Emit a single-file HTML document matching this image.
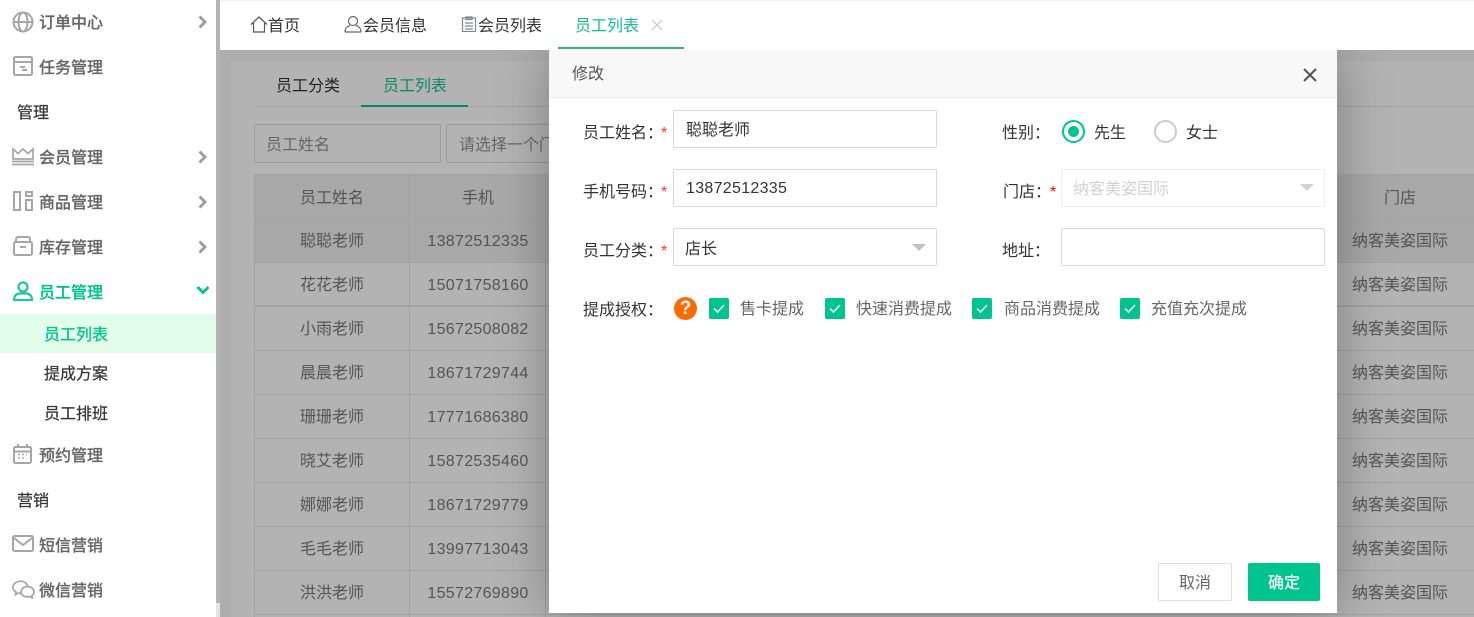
<!DOCTYPE html>
<html lang="zh">
<head>
<meta charset="utf-8">
<title>员工列表</title>
<style>
*{box-sizing:border-box;margin:0;padding:0}
html,body{width:1474px;height:617px;overflow:hidden;background:#fff}
body{position:relative;font-family:"Liberation Sans","Noto Sans CJK SC",sans-serif;font-size:16px;color:#333}
.a{position:absolute;white-space:nowrap}
.side{left:0;top:0;width:216px;height:617px;background:#fff}
.sb{left:216px;top:0;width:4px;height:603px;background:#b3b3b3}
.sb2{left:216px;top:603px;width:4px;height:14px;background:#e3e3e3}
.m{left:39px;line-height:24px;color:#666;font-weight:500;-webkit-text-stroke:.2px #666;transform:translateY(2px)}
.g{left:17px;line-height:24px;color:#333;-webkit-text-stroke:.2px #333;transform:translateY(2px)}
.s{left:44px;line-height:24px;color:#333;-webkit-text-stroke:.2px #333;transform:translateY(2px)}
.ic{position:absolute;fill:none;stroke:#a6a6a6}
.ar{position:absolute;left:198px;fill:none;stroke:#9a9aa6;stroke-width:2.800}
.top{left:220px;top:0;width:1254px;height:50px;background:#fff;border-top:1px solid #f2f2f2}
.t{line-height:24px;top:14px;color:#333;transform:translateY(1px)}
.bg{left:220px;top:50px;width:1254px;height:567px;background:#adadad}
.panel{left:231px;top:61px;width:1243px;height:556px;background:#b3b3b3}
.row{position:absolute;left:254px;width:1220px;height:44px;border-bottom:1px solid #a3a3a3;background:#b3b3b3}
.c{position:absolute;line-height:24px;color:#555;white-space:nowrap;transform:translate(-50%,2px)}
.modal{left:549px;top:50px;width:788px;height:563px;background:#fff;box-shadow:1px 1px 50px rgba(0,0,0,.3);clip-path:inset(0 -70px -70px -70px)}
.mh{left:549px;top:50px;width:788px;height:48px;background:#f8f8f8;border-bottom:1px solid #eee;line-height:50px;padding-left:23px;color:#555}
.l{line-height:24px;color:#333;transform:translateY(2px)}
.req{color:#f33;line-height:24px}
.ip{position:absolute;background:#fff;border:1px solid #d9d9d9;border-radius:2px;height:38px;line-height:36px;padding-left:12px;color:#333;width:264px}
.tri{position:absolute;width:0;height:0;border-left:7px solid transparent;border-right:7px solid transparent;border-top:7px solid #c2c2c2}
.cb{position:absolute;top:298px;width:20px;height:21px;background:#00c48f;border-radius:2px}
.cb svg{position:absolute;left:3px;top:4px}
.cl{top:297px;line-height:24px;color:#666;transform:translateY(1px)}
</style>
</head>
<body>
<div class="a side"></div><div class="a sb"></div><div class="a sb2"></div>

<svg class="ic" style="left:12px;top:11px" width="22" height="22" viewBox="0 0 22 22" stroke-width="2"><circle cx="11" cy="11" r="9.500"/><ellipse cx="11" cy="11" rx="4.500" ry="9.500"/><path d="M1.500 11h19"/></svg>
<div class="a m" style="top:10px">订单中心</div>
<svg class="ar" style="top:15px" width="10" height="14" viewBox="0 0 10 14"><path d="M1.500 1.500 7 7l-5.500 5.500"/></svg>

<svg class="ic" style="left:13px;top:56px" width="20" height="20" viewBox="0 0 20 20" stroke-width="2"><rect x="1" y="1" width="18" height="18" rx="1.500"/><path d="M1 6h18M7 11h5M9 14h5"/></svg>
<div class="a m" style="top:55px">任务管理</div>

<div class="a g" style="top:100px">管理</div>

<svg class="ic" style="left:12px;top:147px" width="22" height="19" viewBox="0 0 22 19" stroke-width="1.700"><path d="M1 12V2l5 4.500L11 2l5 4.500L21 2v10zM0 14.500h22M0 17.500h22"/></svg>
<div class="a m" style="top:145px">会员管理</div>
<svg class="ar" style="top:150px" width="10" height="14" viewBox="0 0 10 14"><path d="M1.500 1.500 7 7l-5.500 5.500"/></svg>

<svg class="ic" style="left:13px;top:191px" width="20" height="20" viewBox="0 0 20 20" stroke-width="2"><rect x="1" y="1" width="6" height="18"/><rect x="13" y="1" width="6" height="4"/><rect x="13" y="9" width="6" height="10"/></svg>
<div class="a m" style="top:190px">商品管理</div>
<svg class="ar" style="top:195px" width="10" height="14" viewBox="0 0 10 14"><path d="M1.500 1.500 7 7l-5.500 5.500"/></svg>

<svg class="ic" style="left:13px;top:236px" width="20" height="20" viewBox="0 0 20 20" stroke-width="2"><path d="M3 6V3a2 2 0 0 1 2-2h10a2 2 0 0 1 2 2v3"/><rect x="1" y="6" width="18" height="13" rx="1.500"/><path d="M7 11h6"/></svg>
<div class="a m" style="top:235px">库存管理</div>
<svg class="ar" style="top:240px" width="10" height="14" viewBox="0 0 10 14"><path d="M1.500 1.500 7 7l-5.500 5.500"/></svg>

<svg class="ic" style="left:13px;top:281px;stroke:#1fc898" width="20" height="20" viewBox="0 0 20 20" stroke-width="2.200"><circle cx="10" cy="6" r="4.500"/><path d="M1 19c0-4.500 2.500-6 5-6.500h8c2.500.5 5 2 5 6.500z"/></svg>
<div class="a m" style="top:280px;color:#00c48f;-webkit-text-stroke:.3px #00c48f">员工管理</div>
<svg class="a" style="left:196px;top:285px;fill:none;stroke:#00c48f;stroke-width:2.800" width="14" height="10" viewBox="0 0 14 10"><path d="M1.500 2 7 7.500 12.500 2"/></svg>

<div class="a" style="left:0;top:314px;width:216px;height:39px;background:#e3fdeb"></div>
<div class="a s" style="top:322px;color:#00c48f;-webkit-text-stroke:.3px #00c48f">员工列表</div>
<div class="a s" style="top:361px">提成方案</div>
<div class="a s" style="top:401px">员工排班</div>

<svg class="ic" style="left:13px;top:444px" width="19" height="20" viewBox="0 0 19 20" stroke-width="2"><rect x="1" y="3" width="17" height="16" rx="1.500"/><path d="M1 7.500h17M5 0v4M14 0v4"/><path d="M5 10.500h2M9 10.500h2M13 10.500h1M5 14h2M9 14h2" stroke-width="1.400"/></svg>
<div class="a m" style="top:443px">预约管理</div>

<div class="a g" style="top:488px">营销</div>

<svg class="ic" style="left:12px;top:535px" width="22" height="18" viewBox="0 0 22 18" stroke-width="2"><rect x="1" y="1" width="20" height="15" rx="1.500"/><path d="M2 3l9 7 9-7"/></svg>
<div class="a m" style="top:533px">短信营销</div>

<svg class="ic" style="left:12px;top:580px" width="23" height="19" viewBox="0 0 23 19" stroke-width="1.700"><path d="M9 13.500c-1 0-2-.1-2.800-.4L3.500 14.500l.6-2.400C2.200 11 1 9.300 1 7.400 1 4 4.500 1.200 8.500 1.200c3.500 0 6.500 2 7.200 4.800"/><path d="M15.500 6.500c3.500 0 6.500 2.400 6.500 5.300 0 1.600-.9 3-2.300 4l.5 2-2.400-1.200c-.7.200-1.500.3-2.300.3-3.500 0-6.500-2.300-6.500-5.100s3-5.300 6.500-5.300z"/></svg>
<div class="a m" style="top:578px">微信营销</div>

<div class="a bg"></div>
<div class="a panel"></div>
<div class="a" style="left:254px;top:106px;width:1220px;height:1px;background:#a3a3a3"></div>
<div class="a" style="left:276px;top:75px;line-height:24px;color:#222">员工分类</div>
<div class="a" style="left:383px;top:75px;line-height:24px;color:#0c8a63">员工列表</div>
<div class="a" style="left:361px;top:105px;width:107px;height:2px;background:#008a63"></div>
<div class="a" style="left:254px;top:124px;width:187px;height:39px;border:1px solid #9b9b9b;border-radius:2px;line-height:41px;padding-left:11px;color:#666">员工姓名</div>
<div class="a" style="left:446px;top:124px;width:200px;height:39px;border:1px solid #9b9b9b;border-radius:2px;line-height:41px;padding-left:12px;color:#666;overflow:hidden">请选择一个门店</div>

<div class="row" style="top:174px;height:45px;background:#a8a8a8;border-top:1px solid #a3a3a3"></div>
<div class="row" style="top:219px;background:#a8a8a8"></div>
<div class="row" style="top:263px;border-bottom-width:2px"></div>
<div class="row" style="top:307px"></div>
<div class="row" style="top:351px"></div>
<div class="row" style="top:395px"></div>
<div class="row" style="top:439px"></div>
<div class="row" style="top:483px"></div>
<div class="row" style="top:527px"></div>
<div class="row" style="top:571px"></div>
<div class="a" style="left:254px;top:174px;width:1px;height:443px;background:#a3a3a3"></div>
<div class="a" style="left:409px;top:174px;width:1px;height:443px;background:#a3a3a3"></div>
<div class="a" style="left:545px;top:174px;width:1px;height:443px;background:#a3a3a3"></div>

<div class="c" style="left:332px;top:185px">员工姓名</div><div class="c" style="left:478px;top:185px">手机</div><div class="c" style="left:1400px;top:185px">门店</div>
<div class="c" style="left:332px;top:228px">聪聪老师</div><div class="c" style="left:478px;top:228px;letter-spacing:.3px">13872512335</div><div class="c" style="left:1400px;top:228px">纳客美姿国际</div>
<div class="c" style="left:332px;top:272px">花花老师</div><div class="c" style="left:478px;top:272px;letter-spacing:.3px">15071758160</div><div class="c" style="left:1400px;top:272px">纳客美姿国际</div>
<div class="c" style="left:332px;top:316px">小雨老师</div><div class="c" style="left:478px;top:316px;letter-spacing:.3px">15672508082</div><div class="c" style="left:1400px;top:316px">纳客美姿国际</div>
<div class="c" style="left:332px;top:360px">晨晨老师</div><div class="c" style="left:478px;top:360px;letter-spacing:.3px">18671729744</div><div class="c" style="left:1400px;top:360px">纳客美姿国际</div>
<div class="c" style="left:332px;top:404px">珊珊老师</div><div class="c" style="left:478px;top:404px;letter-spacing:.3px">17771686380</div><div class="c" style="left:1400px;top:404px">纳客美姿国际</div>
<div class="c" style="left:332px;top:448px">晓艾老师</div><div class="c" style="left:478px;top:448px;letter-spacing:.3px">15872535460</div><div class="c" style="left:1400px;top:448px">纳客美姿国际</div>
<div class="c" style="left:332px;top:492px">娜娜老师</div><div class="c" style="left:478px;top:492px;letter-spacing:.3px">18671729779</div><div class="c" style="left:1400px;top:492px">纳客美姿国际</div>
<div class="c" style="left:332px;top:536px">毛毛老师</div><div class="c" style="left:478px;top:536px;letter-spacing:.3px">13997713043</div><div class="c" style="left:1400px;top:536px">纳客美姿国际</div>
<div class="c" style="left:332px;top:580px">洪洪老师</div><div class="c" style="left:478px;top:580px;letter-spacing:.3px">15572769890</div><div class="c" style="left:1400px;top:580px">纳客美姿国际</div>

<div class="a top"></div>
<svg class="a" style="left:250px;top:16px;fill:none;stroke:#555;stroke-width:1.200" width="18" height="17" viewBox="0 0 18 17"><path d="M1 8.500 9 1l8 7.500M3.500 7v9h11V7"/></svg>
<div class="a t" style="left:268px">首页</div>
<svg class="a" style="left:344px;top:15px;fill:none;stroke:#666;stroke-width:1.200" width="18" height="18" viewBox="0 0 18 18"><circle cx="9" cy="6" r="4.500"/><path d="M1 17c0-4 2-5.500 5-6.500M17 17c0-4-2-5.500-5-6.500M1 17h16"/></svg>
<div class="a t" style="left:363px">会员信息</div>
<svg class="a" style="left:461px;top:16px;fill:none;stroke:#7b8794;stroke-width:1.200" width="16" height="16" viewBox="0 0 16 16"><rect x="1.500" y="2" width="13" height="13.500"/><path d="M5 1h6v2.500H5zM4 7h8M4 10h8M4 13h8"/></svg>
<div class="a t" style="left:478px">会员列表</div>
<div class="a t" style="left:575px;color:#14bd8c">员工列表</div>
<svg class="a" style="left:651px;top:19px;stroke:#ccc;stroke-width:1.300;fill:none" width="12" height="12" viewBox="0 0 12 12"><path d="M1 1l10 10M11 1 1 11"/></svg>
<div class="a" style="left:558px;top:47px;width:126px;height:2px;background:#2eb872"></div>

<div class="a modal"></div>
<div class="a mh">修改</div>
<svg class="a" style="left:1303px;top:68px;stroke:#555;stroke-width:2;fill:none" width="14" height="14" viewBox="0 0 14 14"><path d="M1 1l12 12M13 1 1 13"/></svg>

<div class="a l" style="left:583px;top:120px">员工姓名：</div><div class="a req" style="left:661px;top:122px">*</div>
<div class="ip" style="left:673px;top:110px;line-height:40px">聪聪老师</div>
<div class="a l" style="left:583px;top:179px">手机号码：</div><div class="a req" style="left:661px;top:181px">*</div>
<div class="ip" style="left:673px;top:169px;letter-spacing:.3px;line-height:38px">13872512335</div>
<div class="a l" style="left:583px;top:238px">员工分类：</div><div class="a req" style="left:661px;top:240px">*</div>
<div class="ip" style="left:673px;top:228px;padding-left:11px;line-height:42px">店长</div>
<div class="tri" style="left:912px;top:244px"></div>

<div class="a l" style="left:1002px;top:120px">性别：</div>
<div class="a" style="left:1062px;top:120px;width:23px;height:23px;border:2px solid #00c48f;border-radius:50%"></div>
<div class="a" style="left:1068px;top:126px;width:11px;height:11px;background:#00c48f;border-radius:50%"></div>
<div class="a l" style="left:1094px;top:120px">先生</div>
<div class="a" style="left:1154px;top:120px;width:23px;height:23px;border:2px solid #ccc;border-radius:50%"></div>
<div class="a l" style="left:1186px;top:120px">女士</div>

<div class="a l" style="left:1003px;top:179px">门店：</div><div class="a req" style="left:1050px;top:181px;color:#f00">*</div>
<div class="ip" style="left:1061px;top:169px;border-color:#eee;color:#d2d2d2;padding-left:11px;line-height:40px">纳客美姿国际</div>
<div class="tri" style="left:1300px;top:184px;border-top-color:#d2d2d2"></div>
<div class="a l" style="left:1002px;top:238px">地址：</div>
<div class="ip" style="left:1061px;top:228px"></div>

<div class="a l" style="left:583px;top:297px">提成授权：</div>
<div class="a" style="left:674px;top:297px;width:23px;height:23px;border-radius:50%;background:#ff6a00;color:#fff;text-align:center;line-height:23px;font-weight:700;font-size:19px">?</div>
<div class="cb" style="left:709px"><svg width="14" height="13" viewBox="0 0 14 13" fill="none" stroke="#fff" stroke-width="1.500"><path d="M2 6.500 5.500 10 12 3"/></svg></div>
<div class="a cl" style="left:740px">售卡提成</div>
<div class="cb" style="left:825px"><svg width="14" height="13" viewBox="0 0 14 13" fill="none" stroke="#fff" stroke-width="1.500"><path d="M2 6.500 5.500 10 12 3"/></svg></div>
<div class="a cl" style="left:856px">快速消费提成</div>
<div class="cb" style="left:972px"><svg width="14" height="13" viewBox="0 0 14 13" fill="none" stroke="#fff" stroke-width="1.500"><path d="M2 6.500 5.500 10 12 3"/></svg></div>
<div class="a cl" style="left:1004px">商品消费提成</div>
<div class="cb" style="left:1120px"><svg width="14" height="13" viewBox="0 0 14 13" fill="none" stroke="#fff" stroke-width="1.500"><path d="M2 6.500 5.500 10 12 3"/></svg></div>
<div class="a cl" style="left:1151px">充值充次提成</div>

<div class="a" style="left:1158px;top:563px;width:74px;height:38px;border:1px solid #dedede;border-radius:2px;text-align:center;line-height:40px;color:#666">取消</div>
<div class="a" style="left:1248px;top:563px;width:72px;height:38px;background:#00c48f;border-radius:2px;text-align:center;line-height:41px;color:#fff;-webkit-text-stroke:.2px #fff">确定</div>
</body>
</html>
